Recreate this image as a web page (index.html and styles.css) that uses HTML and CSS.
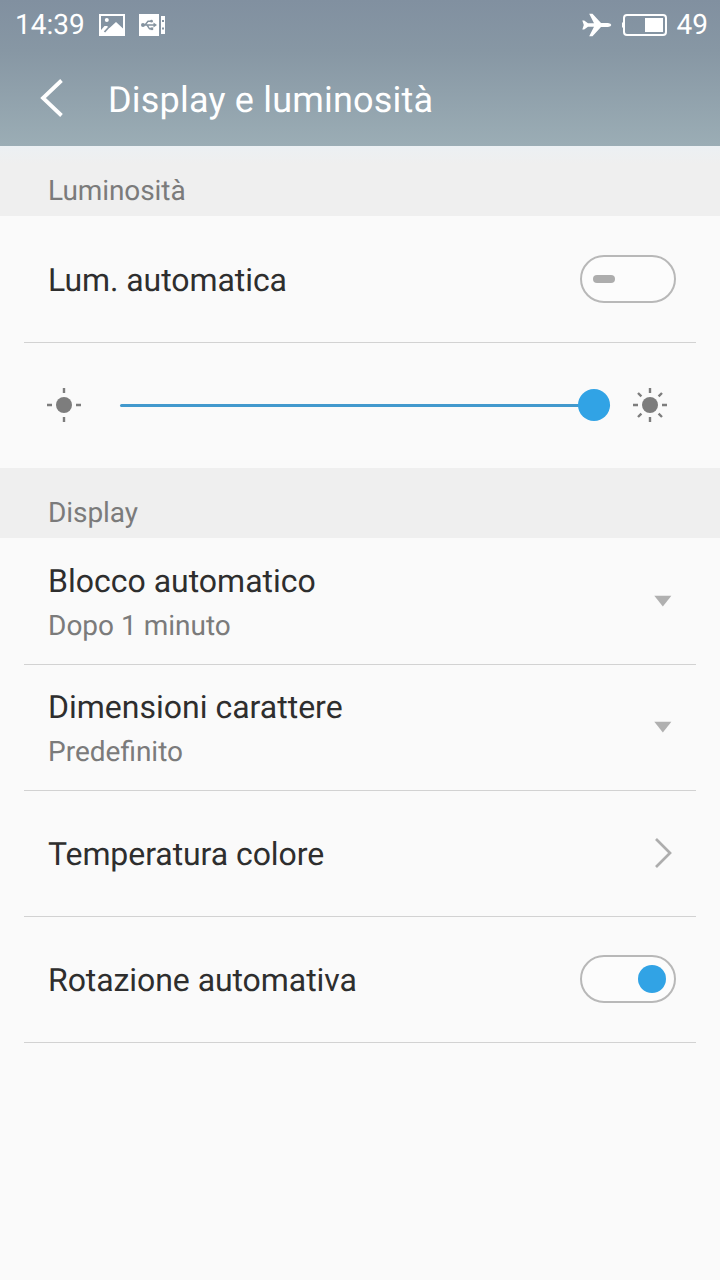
FILE: index.html
```
<!DOCTYPE html>
<html lang="it">
<head>
<meta charset="utf-8">
<title>Display e luminosità</title>
<link rel="stylesheet" href="styles.css">
</head>
<body>
<header class="top">
  <div class="status">
    <span class="clock">14:39</span>
    <svg class="pic" width="26" height="22" viewBox="0 0 26 22">
      <path fill="#fff" fill-rule="evenodd" d="M0 0H26V22H0ZM2 2V16L5.5 12H8L10.5 14L17 8L24 14.5V2Z"/>
      <circle cx="7.8" cy="6" r="2" fill="#fff"/>
      <path d="M5.5 18L10 13" stroke="#8795a2" stroke-width="1.8"/>
    </svg>
    <svg class="usb" width="26" height="22" viewBox="0 0 26 22">
      <path fill="#fff" fill-rule="evenodd" d="M0 0H20V22H0ZM22 2H26V20H22ZM23 6V8H25V6ZM23 13.5V15.5H25V13.5Z"/>
      <g fill="none" stroke="#8493a0" stroke-width="1.4"><path d="M3 11H16M6 11L9 7.2H12M8 11L10.5 14.8H13"/></g>
      <g fill="#8493a0"><circle cx="4" cy="11" r="2"/><path d="M14.5 8.5L18 11L14.5 13.5Z"/><circle cx="12.5" cy="7.2" r="1.4"/><path d="M11.5 13.4H14.2V16.1H11.5Z"/></g>
    </svg>
    <svg class="plane" width="30" height="24" viewBox="0 0 30 24">
      <path fill="#fff" d="M0.3 7.5H2.2L6 10.2H12L7.2 0.8H10.5L19 10H26Q29.3 10.6 29.3 12Q29.3 13.4 26 14H19L10.5 23.2H7.2L12 13.8H6L2.2 16.5H0.3L1.8 12Z"/>
    </svg>
    <svg class="battery" width="46" height="22" viewBox="0 0 46 22">
      <rect x="2" y="1" width="42" height="20" rx="3" fill="none" stroke="#fff" stroke-width="2"/>
      <path fill="#fff" d="M0 8.5H2V13.5H0ZM23 4H41V18H23Z"/>
    </svg>
    <span class="level">49</span>
  </div>
  <div class="bar">
    <svg class="back" width="24" height="40" viewBox="0 0 24 40"><path d="M21.5 2.5L3 20L21.5 37.5" fill="none" stroke="#fff" stroke-width="3.8"/></svg>
    <h1 class="title">Display e luminosità</h1>
  </div>
</header>
<main>
  <h2 class="section first">Luminosità</h2>
  <div class="group">
    <div class="row"><span class="label">Lum. automatica</span><span class="toggle"><i class="dash"></i></span></div>
    <div class="row slider">
      <svg class="sun" width="36" height="36" viewBox="0 0 36 36"><circle cx="18" cy="18" r="8" fill="#7d7d7d"/><path d="M18 1V6M18 30V35M1 18H6M30 18H35" stroke="#7d7d7d" stroke-width="2.4"/></svg>
      <div class="track"><i class="thumb"></i></div>
      <svg class="sun" width="36" height="36" viewBox="0 0 36 36"><circle cx="18" cy="18" r="8" fill="#7d7d7d"/><path d="M18 1V6M18 30V35M1 18H6M30 18H35M6 6L9.4 9.4M26.6 26.6L30 30M30 6L26.6 9.4M9.4 26.6L6 30" stroke="#7d7d7d" stroke-width="2.4"/></svg>
    </div>
  </div>
  <h2 class="section">Display</h2>
  <div class="group last">
    <div class="row"><div class="pair"><span class="label">Blocco automatico</span><span class="value">Dopo 1 minuto</span></div><svg class="caret" width="18" height="12" viewBox="0 0 18 12"><path d="M0.3 0.8H17.4L8.85 11.5Z" fill="#b0b0b0"/></svg></div>
    <div class="row"><div class="pair"><span class="label">Dimensioni carattere</span><span class="value">Predefinito</span></div><svg class="caret" width="18" height="12" viewBox="0 0 18 12"><path d="M0.3 0.8H17.4L8.85 11.5Z" fill="#b0b0b0"/></svg></div>
    <div class="row"><span class="label">Temperatura colore</span><svg class="chevron" width="18" height="32" viewBox="0 0 18 32"><path d="M2 2L16 16L2 30" fill="none" stroke="#adadad" stroke-width="2.7"/></svg></div>
    <div class="row"><span class="label">Rotazione automativa</span><span class="toggle on"><i class="knob"></i></span></div>
  </div>
</main>
</body>
</html>
```
FILE: styles.css
```
* { box-sizing: border-box; }
body {
  margin: 0;
  min-height: 1280px;
  background: #fafafa;
  color: #2e2e2e;
  font-family: Roboto, "Liberation Sans", sans-serif;
  text-rendering: geometricPrecision;
}
svg { display: block; flex: none; }
.top {
  height: 146px;
  color: #fff;
  background: linear-gradient(#8190a0, #8797a4 35%, #9badb5);
}
.status {
  display: flex;
  align-items: center;
  height: 50px;
  padding: 0 12px 0 15px;
  font-size: 28px;
  line-height: 48px;
}
.clock { width: 84px; }
.usb { margin-left: 14px; }
.plane { margin-left: auto; }
.battery { margin-left: 10px; }
.level { margin-left: 9px; }
.bar {
  display: flex;
  align-items: center;
  height: 96px;
  padding-left: 40px;
}
.title {
  margin: 4px 0 0 44px;
  font-size: 36px;
  font-weight: 400;
  line-height: 44px;
  letter-spacing: 0.2px;
}
.section {
  height: 70px;
  margin: 0;
  padding: 19px 48px 0;
  background: #efefef;
  color: #7b7b7b;
  font-size: 28px;
  font-weight: 400;
  line-height: 52px;
  letter-spacing: -0.08px;
}
.first { background: linear-gradient(#ecf0f3, #efefef 18px); }
.group { padding: 0 24px; }
.row {
  display: flex;
  align-items: center;
  justify-content: space-between;
  height: 126px;
  padding: 0 20px 0 24px;
}
.row + .row { padding-bottom: 1px; border-top: 1px solid #d2d2d2; }
.last .row:last-child { height: 127px; padding-bottom: 1px; border-bottom: 1px solid #d2d2d2; }
.label { font-size: 32px; line-height: 48px; padding-top: 2px; letter-spacing: -0.07px; }
.pair { display: flex; flex-direction: column; padding-top: 1px; }
.pair .label { padding: 0; letter-spacing: 0; }
.value { margin-top: 1px; color: #7b7b7b; font-size: 28px; line-height: 40px; }
.toggle {
  display: flex;
  align-items: center;
  width: 96px;
  height: 48px;
  padding: 0 11px;
  border: 2px solid #b8b8b8;
  border-radius: 24px;
  background: #fcfcfc;
}
.dash { width: 22px; height: 8px; border-radius: 4px; background: #adadad; }
.on { justify-content: flex-end; padding-right: 8px; }
.knob { width: 28px; height: 28px; border-radius: 50%; background: #31a3e5; }
.row.slider { padding: 0 28px 2px 22px; }
.track {
  display: flex;
  align-items: center;
  justify-content: flex-end;
  width: 490px;
  height: 3px;
  margin: 1px 0 0 16px;
  border-radius: 2px;
  background: #4299cd;
}
.thumb { flex: none; width: 32px; height: 32px; margin-top: -1px; border-radius: 50%; background: #31a3e5; }
.caret { margin-right: 4px; }
.chevron { margin-right: 4px; }
```
